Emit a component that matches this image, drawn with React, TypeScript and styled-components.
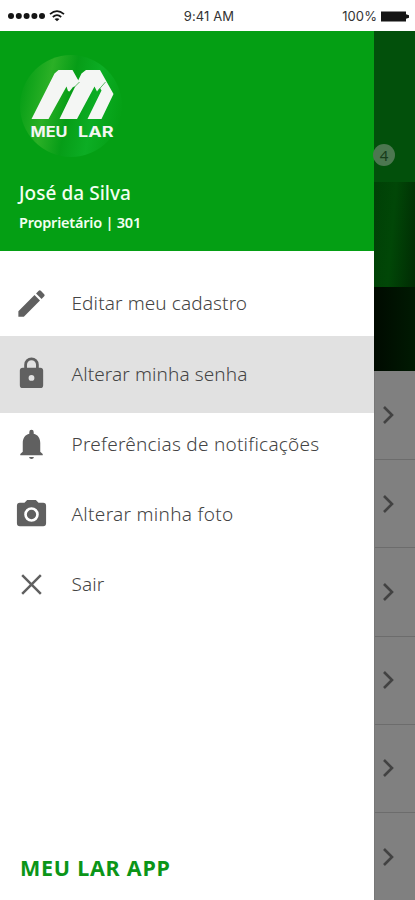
import React from "react";
import styled, { createGlobalStyle } from "styled-components";

const Global = createGlobalStyle`
  * { box-sizing: border-box; }
  body { margin: 0; background: #fff; font-family: "Noto Sans", sans-serif; }
`;
const Screen = styled.main`
  width: 415px; height: 900px; overflow: hidden; background: #fff;
  display: flex; flex-direction: column;
`;
const StatusBar = styled.header`
  height: 31px; flex: none; display: grid; grid-template-columns: 1fr auto 1fr;
  align-items: center; padding: 1px 6px 0 7px; color: #333;
  font: 13px "Inter", sans-serif;
`;
const StatusGroup = styled.div<{ $end?: boolean }>`
  display: flex; align-items: center; gap: 4px;
  justify-content: ${(p) => (p.$end ? "flex-end" : "flex-start")};
`;
const Clock = styled.span`letter-spacing: 0.1px; margin-left: 2px;`;
const Percent = styled.span`letter-spacing: 0.1px;`;
const Body = styled.div`flex: 1; display: flex; min-height: 0;`;
const Drawer = styled.aside`
  width: 374px; flex: none; display: flex; flex-direction: column; background: #fff;
`;
const Profile = styled.section`
  height: 220px; flex: none; padding: 23px 0 0 19px; background: #049f14; color: #f2fff0;
`;
const LogoArt = styled.svg`display: block; width: 106px; height: 106px; font-family: "Inter", sans-serif;`;
const Name = styled.div`
  margin-top: 20px; font-size: 19px; line-height: 26px; font-weight: 500; letter-spacing: 0.05px;
`;
const Role = styled.div`
  margin-top: 5px; font-size: 14.5px; line-height: 22px; font-weight: 600; letter-spacing: -0.22px;
`;
const Menu = styled.nav`flex: 1; padding-top: 17px;`;
const MenuItem = styled.div<{ $active?: boolean }>`
  height: ${(p) => (p.$active ? 77 : 70.3)}px;
  margin: ${(p) => (p.$active ? "-2.3px 0 -4.4px" : "0")};
  padding: ${(p) => (p.$active ? "0 0 2px 14px" : "0 0 0 14px")};
  background: ${(p) => (p.$active ? "#e1e1e1" : "transparent")};
  display: flex; align-items: center;
`;
const Icon = styled.svg`width: 35px; height: 35px; flex: none; fill: #606060; margin-right: 22.5px;`;
const Label = styled.span<{ $spacing: number }>`
  font-size: 19px; line-height: 28px; font-weight: 300; color: #444; white-space: nowrap;
  letter-spacing: ${(p) => p.$spacing}px;
`;
const Brand = styled.footer`
  height: 64px; flex: none; padding: 17px 0 0 20px; color: #0b9518;
  font-size: 21.5px; line-height: 30px; font-weight: 700; letter-spacing: 0.75px;
`;
const Backdrop = styled.div`
  flex: 1; background: #808080; display: flex; flex-direction: column; border-left: 1px solid #777;
`;
const DimHeader = styled.div`
  height: 151px; flex: none; background: #02500b; margin-left: -1px; padding-top: 113px;
`;
const Badge = styled.div`
  width: 22px; height: 22px; border-radius: 50%; background: #4c7750; color: #173c1b;
  font-size: 15px; line-height: 22px; text-align: center; margin-left: -1px;
`;
const DimBanner = styled.div`
  height: 105px; flex: none; margin-left: -1px;
  background: linear-gradient(95deg, #004006 0%, #014707 45%, #002b03 100%);
`;
const DimStrip = styled.div`
  height: 84px; flex: none; margin-left: -1px; background: linear-gradient(90deg, #000a00, #001a02);
`;
const DimRow = styled.div`
  height: 88.2px; flex: none; border-bottom: 1px solid #6c6c6c; padding-left: 7px;
  display: flex; align-items: center;
  &:nth-of-type(4) { height: 89.3px; }
`;
const Chevron = styled.svg`width: 14px; height: 20px; fill: none; stroke: #424242; stroke-width: 2.6;`;

const items = [
  { label: "Editar meu cadastro", spacing: 0.11, path: "M3 17.25V21h3.75L17.81 9.94l-3.75-3.75L3 17.25zM20.71 7.04a1 1 0 0 0 0-1.41l-2.34-2.34a1 1 0 0 0-1.41 0l-1.83 1.83 3.75 3.75 1.83-1.83z" },
  { label: "Alterar minha senha", spacing: 0.1, path: "M18 8h-1V6A5 5 0 0 0 7 6v2H6a2 2 0 0 0-2 2v10a2 2 0 0 0 2 2h12a2 2 0 0 0 2-2V10a2 2 0 0 0-2-2zm-6 9a2 2 0 1 1 0-4 2 2 0 0 1 0 4zm3.1-9H8.9V6a3.1 3.1 0 0 1 6.2 0v2z" },
  { label: "Preferências de notificações", spacing: 0.25, path: "M12 22.6a1.7 1.7 0 0 0 1.7-1.3h-3.4A1.7 1.7 0 0 0 12 22.6zm6-5v-6c0-3.1-1.6-5.7-4.5-6.3V4.1a1.5 1.5 0 0 0-3 0v1.2C7.6 5.9 6 8.5 6 11.6v6l-1.7 1.6v.8h15.4v-.8L18 17.6z" },
  { label: "Alterar minha foto", spacing: 0.3, path: "M9 2 7.2 4H4a2 2 0 0 0-2 2v12a2 2 0 0 0 2 2h16a2 2 0 0 0 2-2V6a2 2 0 0 0-2-2h-3.2L15 2H9zm3 15a5 5 0 1 1 0-10 5 5 0 0 1 0 10zm0-1.8a3.2 3.2 0 1 0 0-6.4 3.2 3.2 0 0 0 0 6.4z" },
  { label: "Sair", spacing: 0.1, path: "M19 6.2 17.8 5 12 10.8 6.2 5 5 6.2 10.8 12 5 17.8 6.2 19 12 13.2 17.8 19 19 17.8 13.2 12z" },
];

function Logo() {
  return (
    <LogoArt viewBox="19 54 106 106">
      <defs>
        <linearGradient id="shine" x1="0" y1=".4" x2="1" y2=".6">
          <stop offset="0" stopColor="#079f16" />
          <stop offset=".25" stopColor="#2bb026" />
          <stop offset=".48" stopColor="#069d17" />
          <stop offset=".72" stopColor="#0cad24" />
          <stop offset="1" stopColor="#049f14" />
        </linearGradient>
      </defs>
      <circle cx="71" cy="106" r="51" fill="url(#shine)" />
      <g fill="#f4f6f4">
        <path d="M31.5 119 54.5 73.5 58.5 70H72.5L79.5 82.5 77 86 73 87 69.5 91.5 68 91 66.5 86.5 48.5 119Z" />
        <path d="M59.5 119 81.5 73.5 86 70H100L113.5 94 101.5 119H87.5L101.5 90.5 100 88 97 91.5 94.5 86.5 77 119Z" />
        <text x="30.5" y="137" fontSize="14" fontWeight="700" textLength="37" lengthAdjust="spacingAndGlyphs">MEU</text>
        <text x="78" y="137" fontSize="14" fontWeight="700" textLength="35.5" lengthAdjust="spacingAndGlyphs">LAR</text>
      </g>
      <path d="m98 90.5 7.5-8.5M74 87.5l5.5-5.5" stroke="#39a844" strokeWidth=".8" />
    </LogoArt>
  );
}

export default function App() {
  return (
    <Screen>
      <Global />
      <StatusBar>
        <StatusGroup>
          <svg width="38" height="8" fill="#151515">
            {[4, 11.8, 19.6, 27.4, 35].map((x) => <circle key={x} cx={x} cy="4" r="3" />)}
          </svg>
          <svg width="16" height="12" viewBox="0 0 16 12" fill="none" stroke="#151515" strokeWidth="1.7">
            <path d="M1 4.2Q8-1.8 15 4.2M3.8 7Q8 3.4 12.2 7" />
            <path d="m8 11.3-2.5-2.2Q8 7.2 10.5 9.1Z" fill="#151515" stroke="none" />
          </svg>
        </StatusGroup>
        <Clock>9:41 AM</Clock>
        <StatusGroup $end>
          <Percent>100%</Percent>
          <svg width="28" height="11" fill="#151515">
            <path d="M0 .5h25v2.7l3 1v2.6l-3 1v2.7H0z" />
          </svg>
        </StatusGroup>
      </StatusBar>
      <Body>
        <Drawer>
          <Profile>
            <Logo />
            <Name>José da Silva</Name>
            <Role>Proprietário | 301</Role>
          </Profile>
          <Menu>
            {items.map((item, i) => (
              <MenuItem key={item.label} $active={i === 1}>
                <Icon viewBox="0 0 24 24"><path fillRule="evenodd" d={item.path} /></Icon>
                <Label $spacing={item.spacing}>{item.label}</Label>
              </MenuItem>
            ))}
          </Menu>
          <Brand>MEU LAR APP</Brand>
        </Drawer>
        <Backdrop>
          <DimHeader><Badge>4</Badge></DimHeader>
          <DimBanner />
          <DimStrip />
          {[0, 1, 2, 3, 4, 5].map((n) => (
            <DimRow key={n}>
              <Chevron viewBox="0 0 14 20"><path d="m2 2 8 8-8 8" /></Chevron>
            </DimRow>
          ))}
        </Backdrop>
      </Body>
    </Screen>
  );
}
